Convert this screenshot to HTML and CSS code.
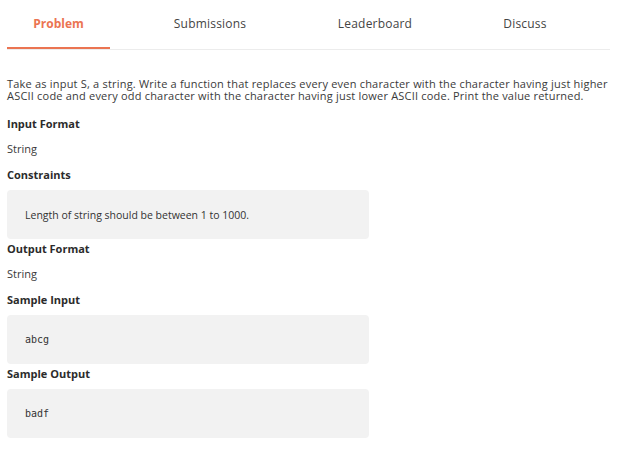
FILE: index.html
```html
<!DOCTYPE html>
<html>
<head>
<meta charset="utf-8">
<link rel="stylesheet" href="styles.css">
</head>
<body>
<div class="page">
  <nav class="tabs">
    <div class="tab tab-1 active">Problem</div>
    <div class="tab tab-2">Submissions</div>
    <div class="tab tab-3">Leaderboard</div>
    <div class="tab tab-4">Discuss</div>
  </nav>
  <p class="desc">Take as input S, a string. Write a function that replaces every even character with the character having just higher ASCII code and every odd character with the character having just lower ASCII code. Print the value returned.</p>
  <h4 class="head first">Input Format</h4>
  <div class="val">String</div>
  <h4 class="head">Constraints</h4>
  <div class="box">Length of string should be between 1 to 1000.</div>
  <h4 class="head after-box">Output Format</h4>
  <div class="val">String</div>
  <h4 class="head">Sample Input</h4>
  <div class="box code">abcg</div>
  <h4 class="head after-box">Sample Output</h4>
  <div class="box code">badf</div>
</div>
</body>
</html>
```

FILE: styles.css
```css
* { box-sizing: border-box; }
html, body { margin: 0; padding: 0; background: #fff; }
body {
  font-family: "Open Sans", "Lato", sans-serif;
  color: #333;
  font-size: 11px;
}
.page { padding: 0 18px 0 7px; }
.tabs {
  display: grid;
  grid-template-columns: 103px 200px 130px 170px;
  width: 603px;
  height: 50px;
  border-bottom: 1px solid #ececec;
}
.tab {
  height: 49px;
  line-height: 47px;
  text-align: center;
  font-size: 12px;
  letter-spacing: 0.2px;
  color: #444;
  border-bottom: 2px solid transparent;
}
.tab.active {
  color: #eb7452;
  font-weight: 700;
  letter-spacing: 0;
  border-bottom-color: #eb7452;
}
.desc {
  margin: 28px 0 0;
  line-height: 12px;
  font-size: 11px;
  letter-spacing: 0.2px;
  color: #3a3a3a;
}
.head {
  margin: 12px 0 0;
  font-size: 11px;
  line-height: 14px;
  font-weight: 700;
  color: #2b2b2b;
}
.head.first { margin-top: 15px; }
.head.after-box { margin-top: 3px; }
.val {
  margin-top: 11px;
  line-height: 14px;
  font-size: 11px;
  color: #3a3a3a;
}
.box {
  margin-top: 8px;
  width: 362px;
  height: 49px;
  background: #f2f2f2;
  border-radius: 4px;
  padding-left: 18px;
  display: flex;
  align-items: center;
  font-size: 10.5px;
  color: #333;
}
.box.code {
  font-family: "DejaVu Sans Mono", "Liberation Mono", monospace;
  font-size: 10px;
}
```
